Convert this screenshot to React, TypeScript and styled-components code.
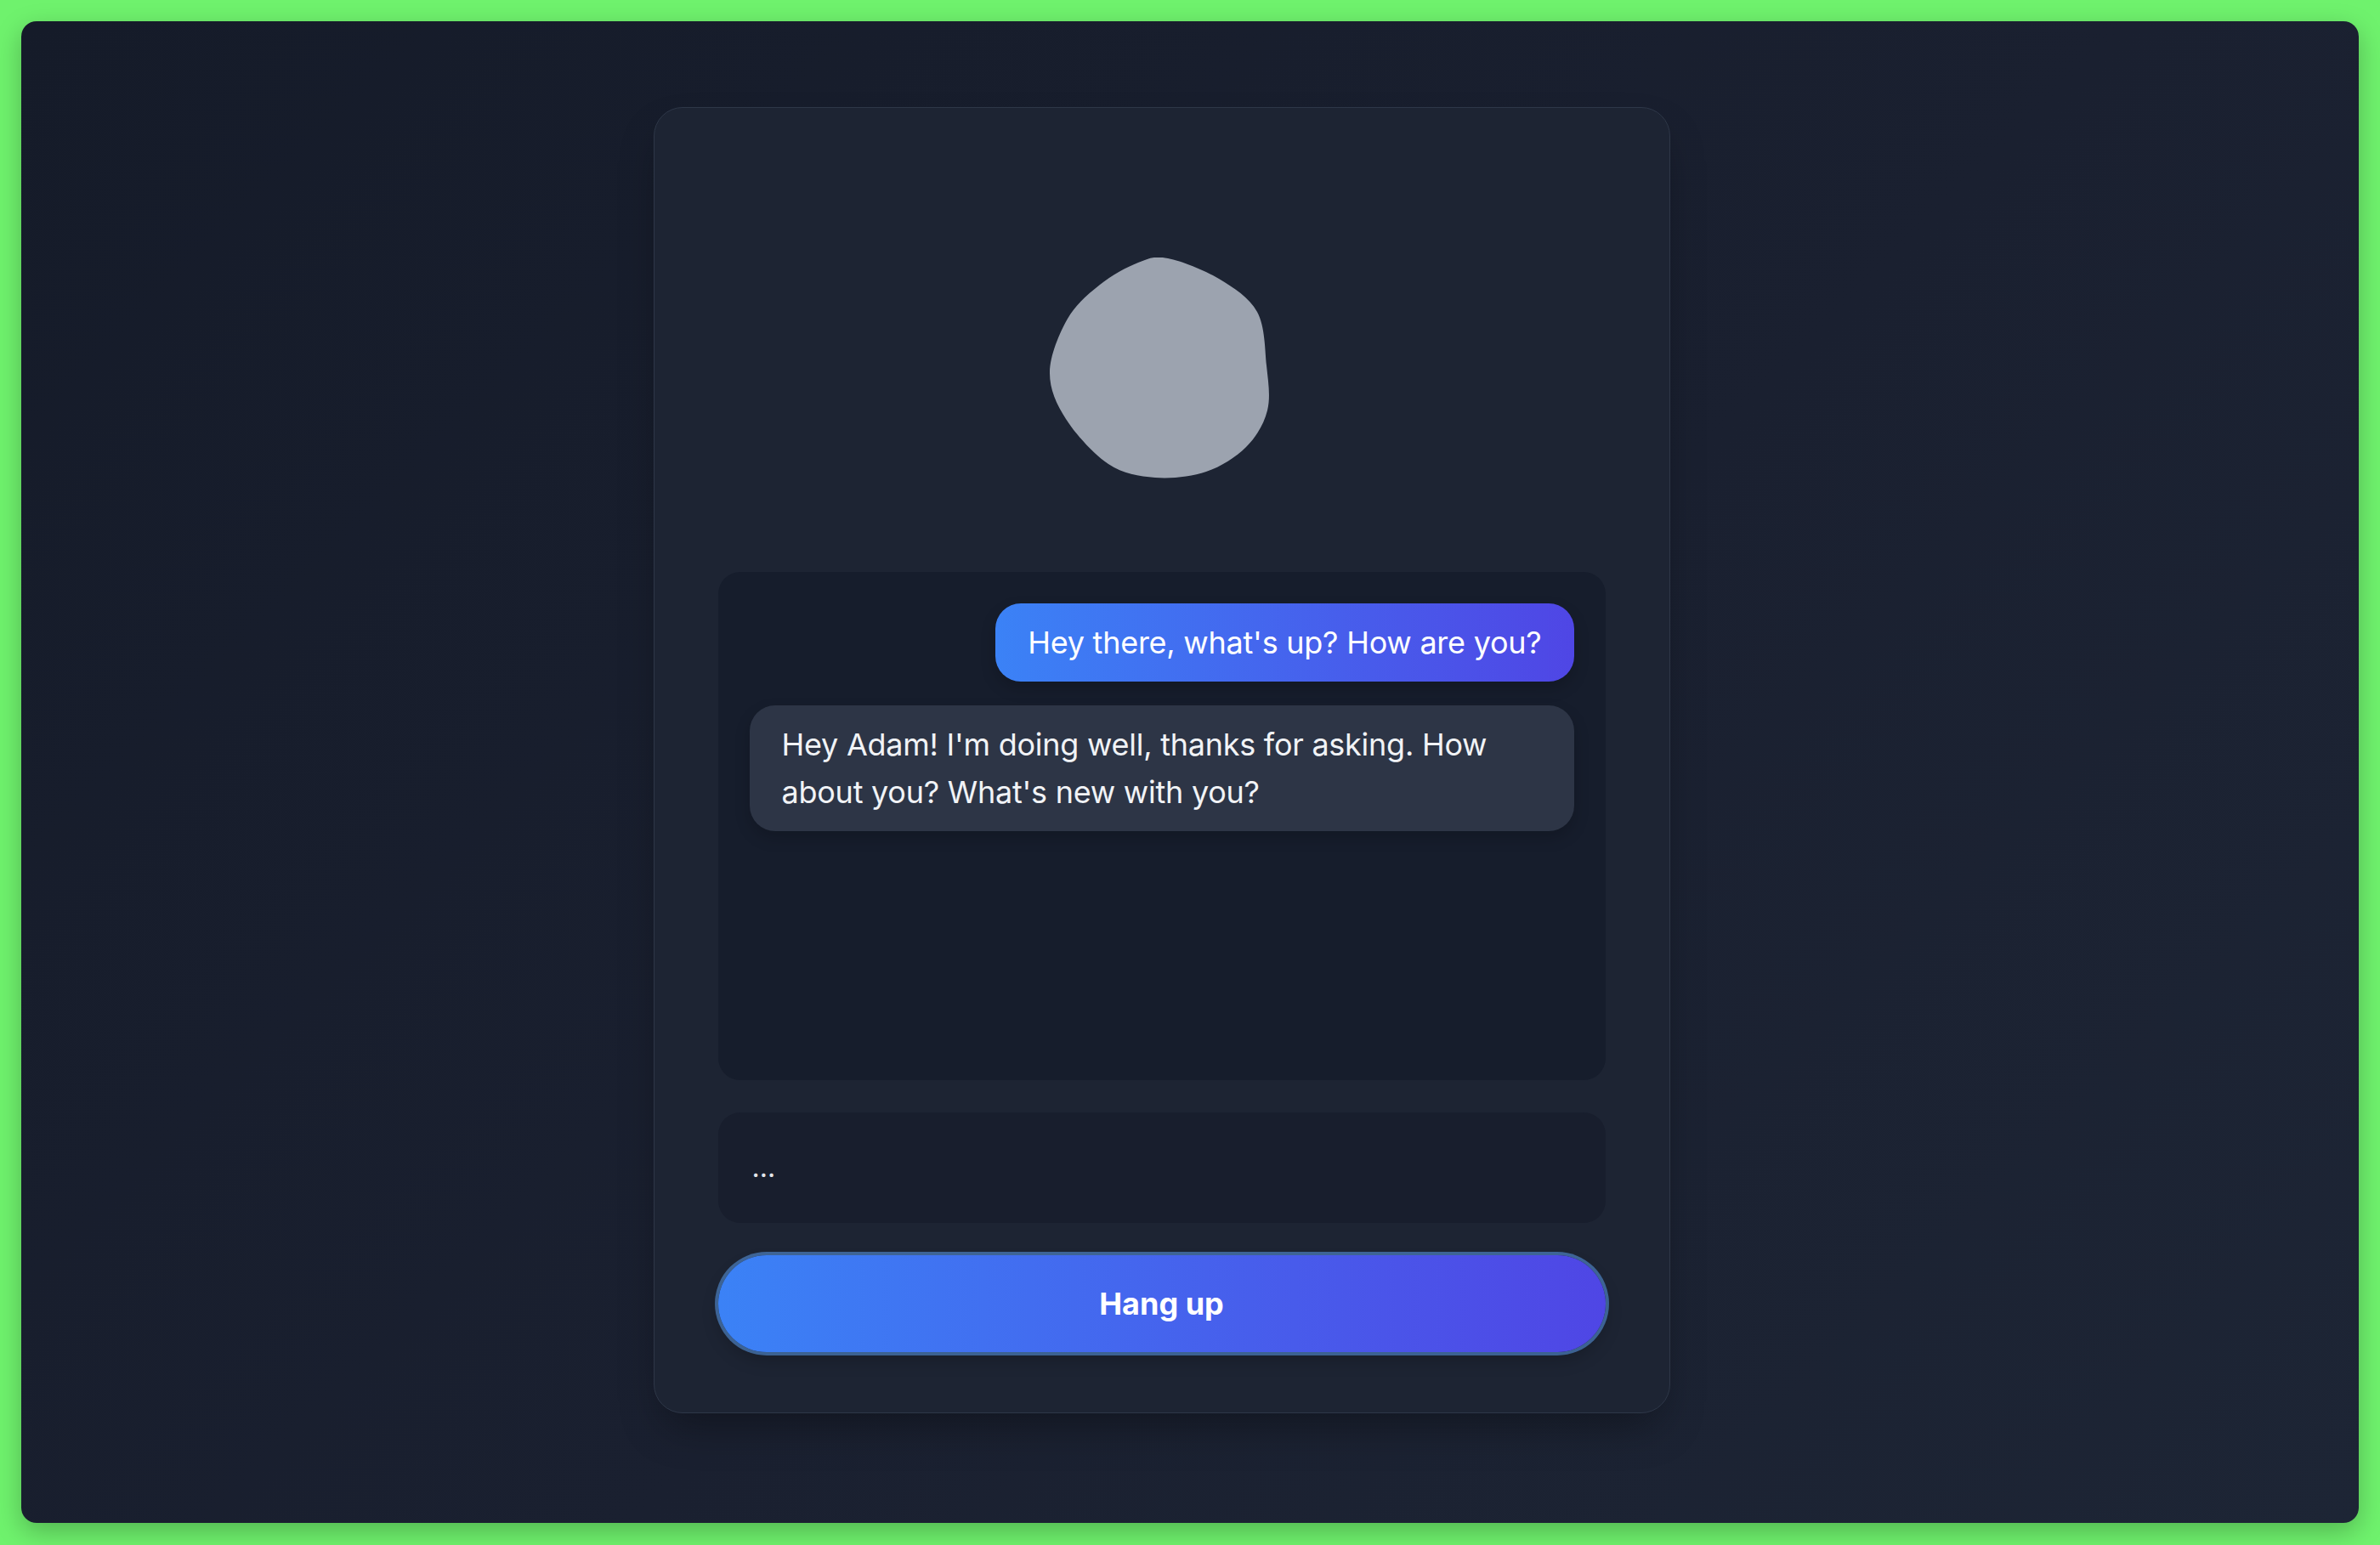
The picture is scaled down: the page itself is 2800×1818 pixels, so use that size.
import React from "react";
import styled, { createGlobalStyle } from "styled-components";

const GlobalStyle = createGlobalStyle`
  html, body {
    margin: 0;
    padding: 0;
    background: #6ff26d;
  }
  body {
    font-family: Inter, "Noto Sans", "Liberation Sans", sans-serif;
    -webkit-font-smoothing: antialiased;
  }
  * { box-sizing: border-box; }
`;

const Frame = styled.div`
  width: 2800px;
  height: 1818px;
  padding: 25px 25px 26px 25px;
  background: #6ff26d;
`;

const Panel = styled.main`
  height: 1767px;
  border-radius: 18px;
  background: linear-gradient(135deg, #151b29 0%, #1a2030 55%, #1d2535 100%);
  box-shadow: 0 10px 30px rgba(0, 0, 0, 0.25);
  display: flex;
  justify-content: center;
  align-items: flex-start;
  padding: 101px 67px 0 0;
`;

const Card = styled.section`
  width: 1196px;
  border: 1.5px solid #2e3748;
  border-radius: 34px;
  background: #1d2433;
  box-shadow: 0 25px 50px -12px rgba(0, 0, 0, 0.35);
  padding: 176px 75px 71px 75px;
  display: flex;
  flex-direction: column;
  align-items: stretch;
`;

const AvatarWrap = styled.div`
  display: flex;
  justify-content: center;
  margin-bottom: 110px;
  padding-right: 6px;
`;

const ChatBox = styled.div`
  height: 598px;
  border-radius: 26px;
  background: #161d2c;
  padding: 37px 37px;
  display: flex;
  flex-direction: column;
  gap: 28px;
`;

const Bubble = styled.div<{ $mine?: boolean }>`
  align-self: ${(p) => (p.$mine ? "flex-end" : "stretch")};
  max-width: 100%;
  padding: 18px 38px;
  border-radius: 30px;
  font-size: 36px;
  line-height: 56px;
  letter-spacing: -0.25px;
  color: ${(p) => (p.$mine ? "#ffffff" : "#f1f3f6")};
  background: ${(p) =>
    p.$mine ? "linear-gradient(90deg, #3b82f6 0%, #4f46e5 100%)" : "#2d3546"};
  box-shadow: 0 8px 18px rgba(0, 0, 0, 0.18);
`;

const Transcript = styled.div`
  margin-top: 38px;
  height: 130px;
  border-radius: 26px;
  background: #181e2d;
  display: flex;
  align-items: center;
  padding: 0 40px;
  color: #e2e5ea;
  font-size: 32px;
  line-height: 1;
`;

const HangUp = styled.button`
  margin-top: 38px;
  height: 114px;
  border: none;
  border-radius: 60px;
  background: linear-gradient(90deg, #3b82f6 0%, #4f46e5 100%);
  box-shadow: 0 0 0 4px rgba(96, 165, 250, 0.5), 0 10px 20px rgba(0, 0, 0, 0.2);
  color: #ffffff;
  font-family: Inter, "Noto Sans", "Liberation Sans", sans-serif;
  font-size: 36px;
  font-weight: 700;
  cursor: pointer;
`;

const BLOB_POINTS: [number, number][] = [
  [105, 6],
  [140, 1],
  [200, 25],
  [245, 64],
  [256, 127],
  [257, 180],
  [232, 223],
  [185, 252],
  [125, 259],
  [70, 243],
  [20, 190],
  [1, 135],
  [22, 72],
  [60, 32],
];

function blobPath(pts: [number, number][], k = 1 / 6): string {
  const n = pts.length;
  let d = `M ${pts[0][0]} ${pts[0][1]}`;
  for (let i = 0; i < n; i++) {
    const p0 = pts[(i - 1 + n) % n];
    const p1 = pts[i];
    const p2 = pts[(i + 1) % n];
    const p3 = pts[(i + 2) % n];
    const c1x = p1[0] + (p2[0] - p0[0]) * k;
    const c1y = p1[1] + (p2[1] - p0[1]) * k;
    const c2x = p2[0] - (p3[0] - p1[0]) * k;
    const c2y = p2[1] - (p3[1] - p1[1]) * k;
    d += ` C ${c1x.toFixed(1)} ${c1y.toFixed(1)}, ${c2x.toFixed(1)} ${c2y.toFixed(1)}, ${p2[0]} ${p2[1]}`;
  }
  return d + " Z";
}

const Blob = () => (
  <svg width="260" height="260" viewBox="0 0 260 260" aria-hidden="true">
    <path d={blobPath(BLOB_POINTS)} fill="#9ca3af" />
  </svg>
);

export default function App() {
  return (
    <>
      <GlobalStyle />
      <Frame>
        <Panel>
          <Card>
            <AvatarWrap>
              <Blob />
            </AvatarWrap>
            <ChatBox>
              <Bubble $mine>Hey there, what's up? How are you?</Bubble>
              <Bubble>
                Hey Adam! I'm doing well, thanks for asking. How about you? What's new with you?
              </Bubble>
            </ChatBox>
            <Transcript>...</Transcript>
            <HangUp>Hang up</HangUp>
          </Card>
        </Panel>
      </Frame>
    </>
  );
}
